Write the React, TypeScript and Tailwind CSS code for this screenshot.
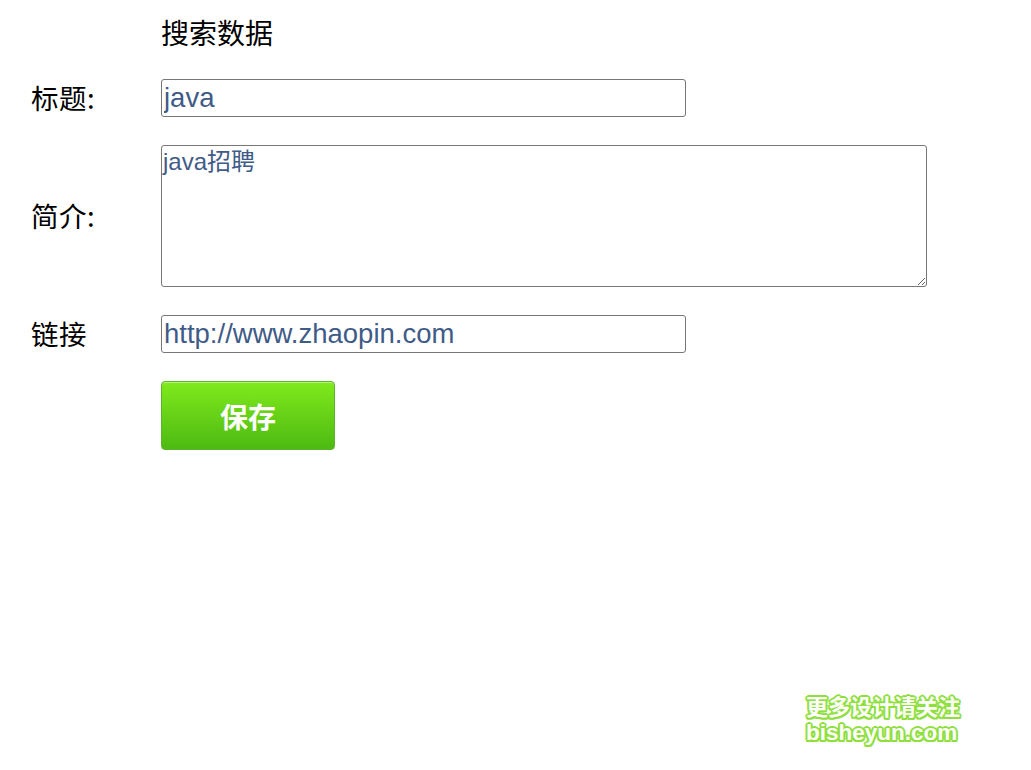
import React from "react";

const cjk = "font-['Noto_Sans_CJK_SC','Noto_Sans',sans-serif]";

export default function App() {
  return (
    <div className="relative w-[1031px] h-[770px] bg-white overflow-hidden">
      <div className={`pt-[13px] pl-[31px] grid grid-cols-[130px_1fr] gap-y-[28px] items-center text-black ${cjk}`}>
        <div />
        <div className="h-[38px] flex items-center text-[28px] leading-none">搜索数据</div>

        <div className="text-[27.5px] leading-none tracking-[0.5px]">标题:</div>
        <input
          readOnly
          defaultValue="java"
          className="w-[525px] h-[38px] border border-[#767676] rounded-[3px] px-[2px] text-[27.5px] text-[#3f5b87] font-['Liberation_Sans','Noto_Sans_CJK_SC',sans-serif] outline-none"
        />

        <div className="text-[27.5px] leading-none tracking-[0.5px]">简介:</div>
        <textarea
          readOnly
          defaultValue="java招聘"
          className="block w-[766px] h-[142px] border border-[#767676] rounded-[3px] px-[1px] py-[2px] text-[24px] leading-[28px] text-[#3f5b87] font-['Liberation_Sans','Noto_Sans_CJK_SC',sans-serif] outline-none resize"
        />

        <div className="text-[27.5px] leading-none tracking-[0.5px]">链接</div>
        <input
          readOnly
          defaultValue="http://www.zhaopin.com"
          className="w-[525px] h-[38px] border border-[#767676] rounded-[3px] px-[2px] text-[27.5px] text-[#3f5b87] font-['Liberation_Sans','Noto_Sans_CJK_SC',sans-serif] outline-none"
        />

        <div />
        <button className="w-[174px] h-[69px] rounded-[4px] border border-[#5ab52a] bg-gradient-to-b from-[#80ea1c] to-[#4cba12] shadow-[inset_0_1px_0_rgba(255,255,255,0.45)] text-white text-[28px] font-bold flex items-center justify-center">
          保存
        </button>
      </div>

      <div
        className={`absolute left-[806px] top-[692px] text-white font-bold text-[22px] leading-[27px] ${cjk} [text-shadow:2px_0_0_#8fe03e,-2px_0_0_#8fe03e,0_2px_0_#8fe03e,0_-2px_0_#8fe03e,1.5px_1.5px_0_#8fe03e,-1.5px_-1.5px_0_#8fe03e,1.5px_-1.5px_0_#8fe03e,-1.5px_1.5px_0_#8fe03e]`}
      >
        <div>更多设计请关注</div>
        <div className="text-[22.5px] leading-[27px] font-['Liberation_Sans',sans-serif]">bisheyun.com</div>
      </div>
    </div>
  );
}
